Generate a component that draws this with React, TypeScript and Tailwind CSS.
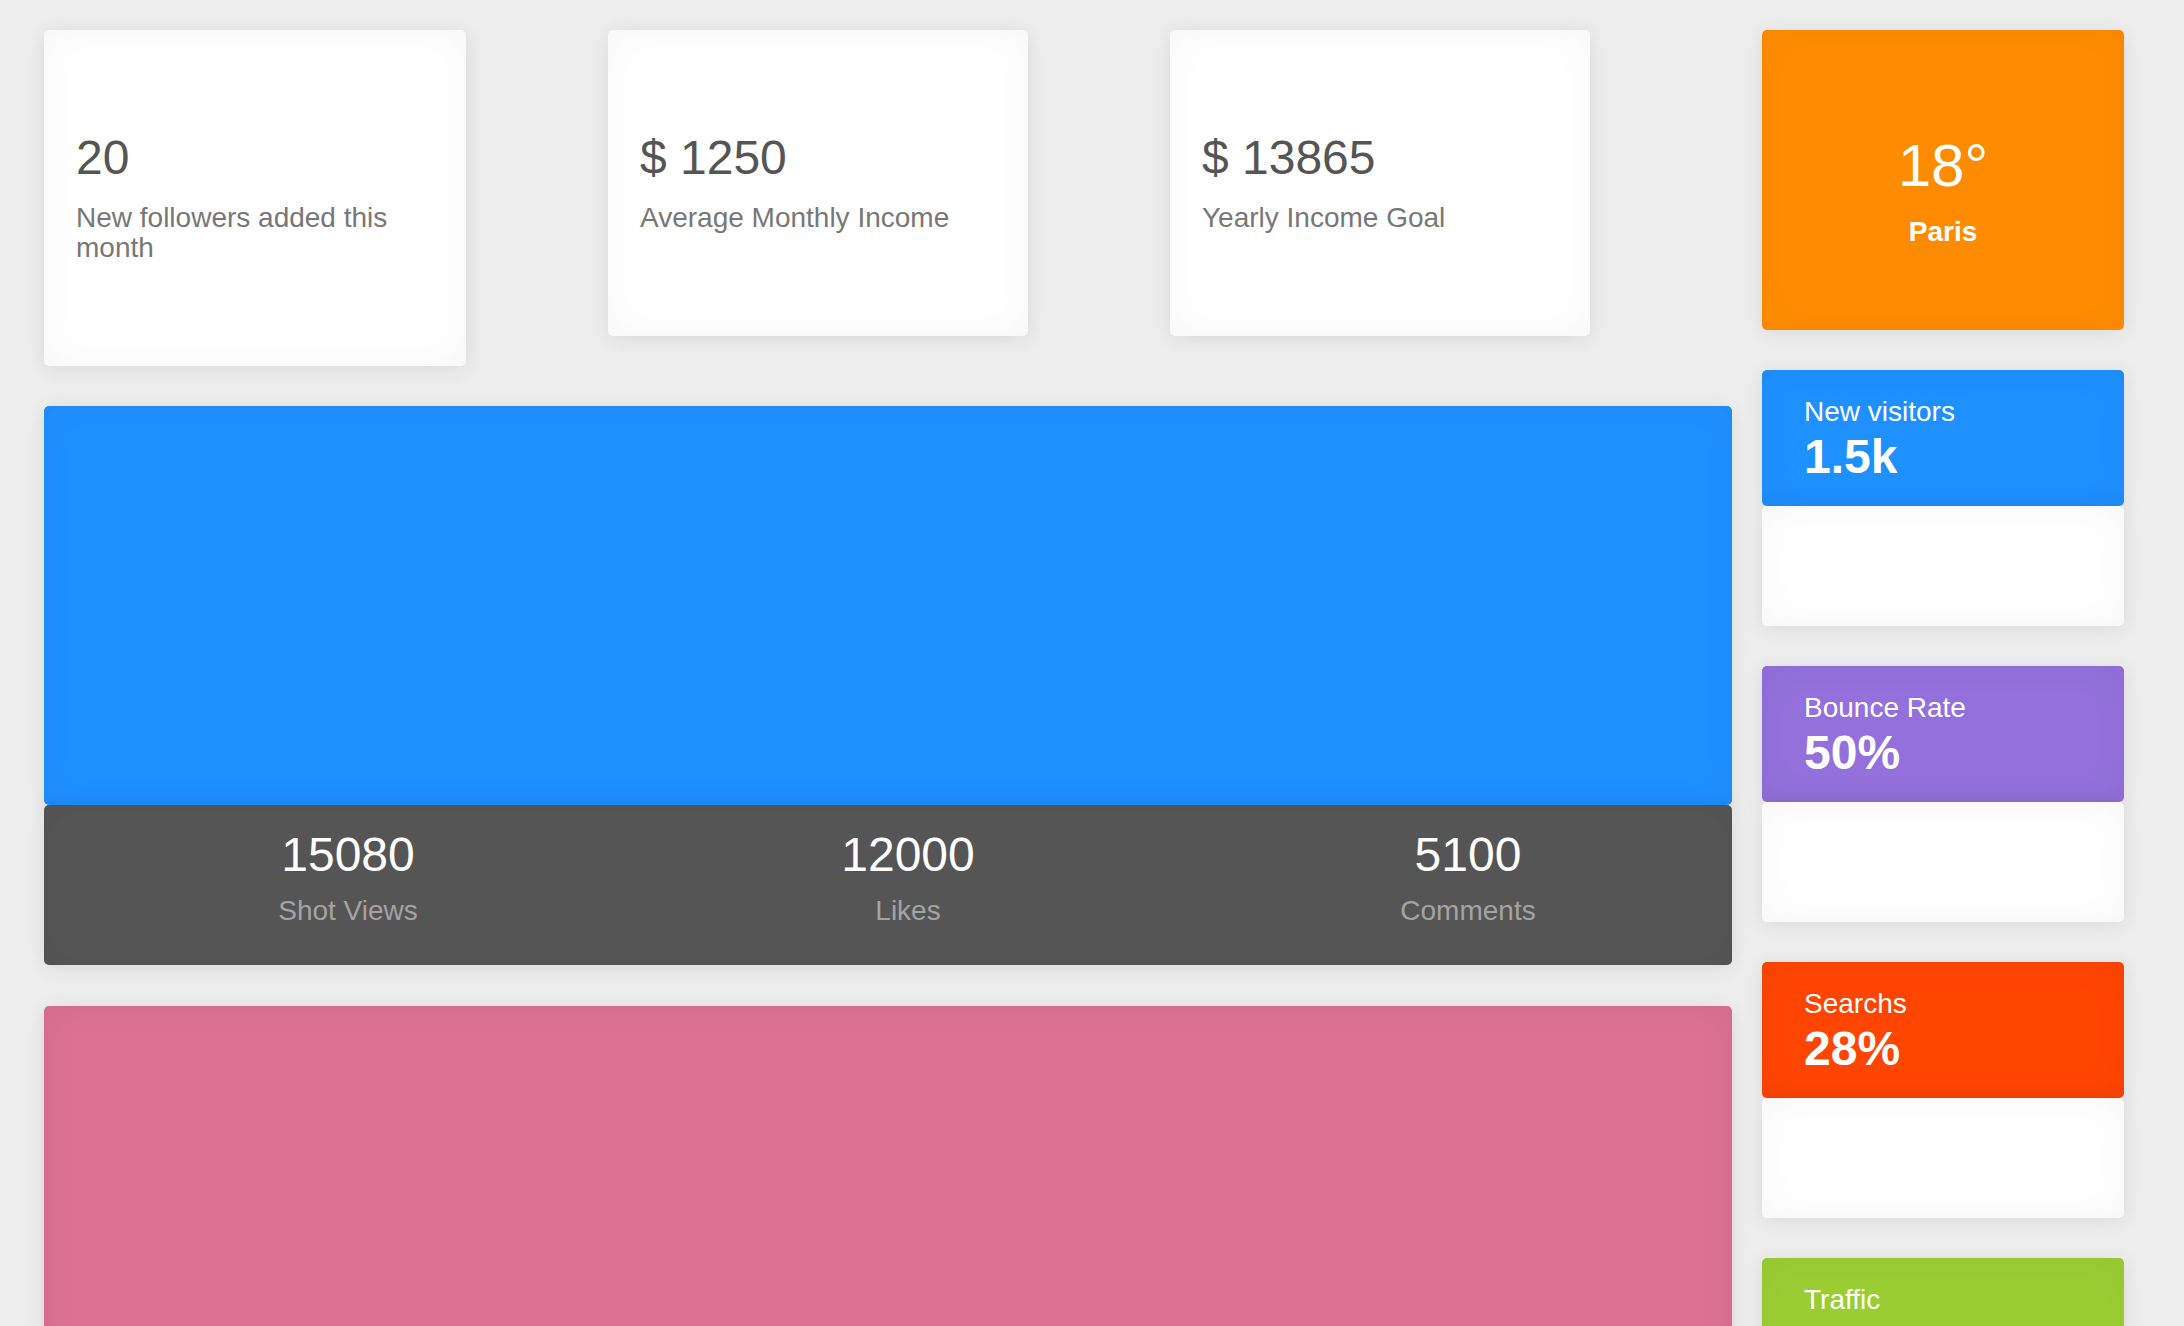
import React from "react";

const cardShadow =
  "shadow-[0_3px_22px_rgba(0,0,0,0.09),inset_0_0_40px_rgba(0,0,0,0.04)]";

function StatCard({
  value,
  label,
  width,
}: {
  value: string;
  label: string;
  width: string;
}) {
  return (
    <div
      className={`${width} bg-white rounded-[5px] px-[32px] pt-[102px] pb-[103px] shadow-[0_3px_22px_rgba(0,0,0,0.09),inset_0_0_40px_rgba(0,0,0,0.04)]`}
    >
      <div className="text-[48px] leading-[52px] text-[#555555]">{value}</div>
      <div className="mt-[19px] text-[28px] leading-[30px] text-[#777777] pr-[20px]">
        {label}
      </div>
    </div>
  );
}

function SideStat({
  title,
  value,
  color,
}: {
  title: string;
  value: string;
  color: string;
}) {
  return (
    <div className="flex flex-col">
      <div
        className={`${color} h-[136px] rounded-[5px] pl-[42px] pt-[26px] text-white shadow-[0_3px_22px_rgba(0,0,0,0.09),inset_0_0_40px_rgba(0,0,0,0.04)]`}
      >
        <div className="text-[28px] leading-[32px]">{title}</div>
        <div className="mt-[3px] text-[48px] leading-[52px] font-bold">{value}</div>
      </div>
      <div className="h-[120px] bg-white rounded-[5px] shadow-[0_3px_22px_rgba(0,0,0,0.09),inset_0_0_40px_rgba(0,0,0,0.04)]" />
    </div>
  );
}

function Metric({ value, label }: { value: string; label: string }) {
  return (
    <div className="w-[560px] shrink-0 flex flex-col items-center">
      <div className="text-[48px] leading-[52px] text-white">{value}</div>
      <div className="mt-[15px] text-[28px] leading-[30px] text-[#a3a3a3]">{label}</div>
    </div>
  );
}

export default function App() {
  return (
    <div className="min-h-screen bg-[#eeeeee] font-['Liberation_Sans',Arial,Helvetica,sans-serif] pl-[44px] pt-[30px] flex gap-[30px] overflow-hidden">
      <div className="w-[1688px] shrink-0 flex flex-col">
        <div className="flex items-start gap-[142px]">
          <StatCard width="w-[422px]" value="20" label="New followers added this month" />
          <StatCard width="w-[420px]" value="$ 1250" label="Average Monthly Income" />
          <StatCard width="w-[420px]" value="$ 13865" label="Yearly Income Goal" />
        </div>
        <div className={`mt-[40px] h-[399px] bg-[#1e90ff] rounded-[5px] ${cardShadow}`} />
        <div className={`h-[160px] bg-[#555555] rounded-[5px] pt-[24px] flex pl-[24px] ${cardShadow}`}>
          <Metric value="15080" label="Shot Views" />
          <Metric value="12000" label="Likes" />
          <Metric value="5100" label="Comments" />
        </div>
        <div className={`mt-[41px] h-[420px] bg-[#db7093] rounded-[5px] ${cardShadow}`} />
      </div>
      <div className="w-[362px] shrink-0 flex flex-col gap-[40px] pb-[40px]">
        <div className={`h-[300px] bg-[#ff8c00] rounded-[5px] flex flex-col items-center pt-[104px] text-white ${cardShadow}`}>
          <div className="text-[60px] leading-[64px]">18°</div>
          <div className="mt-[18px] text-[28px] leading-[32px] font-bold">Paris</div>
        </div>
        <SideStat title="New visitors" value="1.5k" color="bg-[#1e90ff]" />
        <SideStat title="Bounce Rate" value="50%" color="bg-[#9370db]" />
        <SideStat title="Searchs" value="28%" color="bg-[#ff4500]" />
        <SideStat title="Traffic" value="140k" color="bg-[#9acd32]" />
      </div>
    </div>
  );
}
